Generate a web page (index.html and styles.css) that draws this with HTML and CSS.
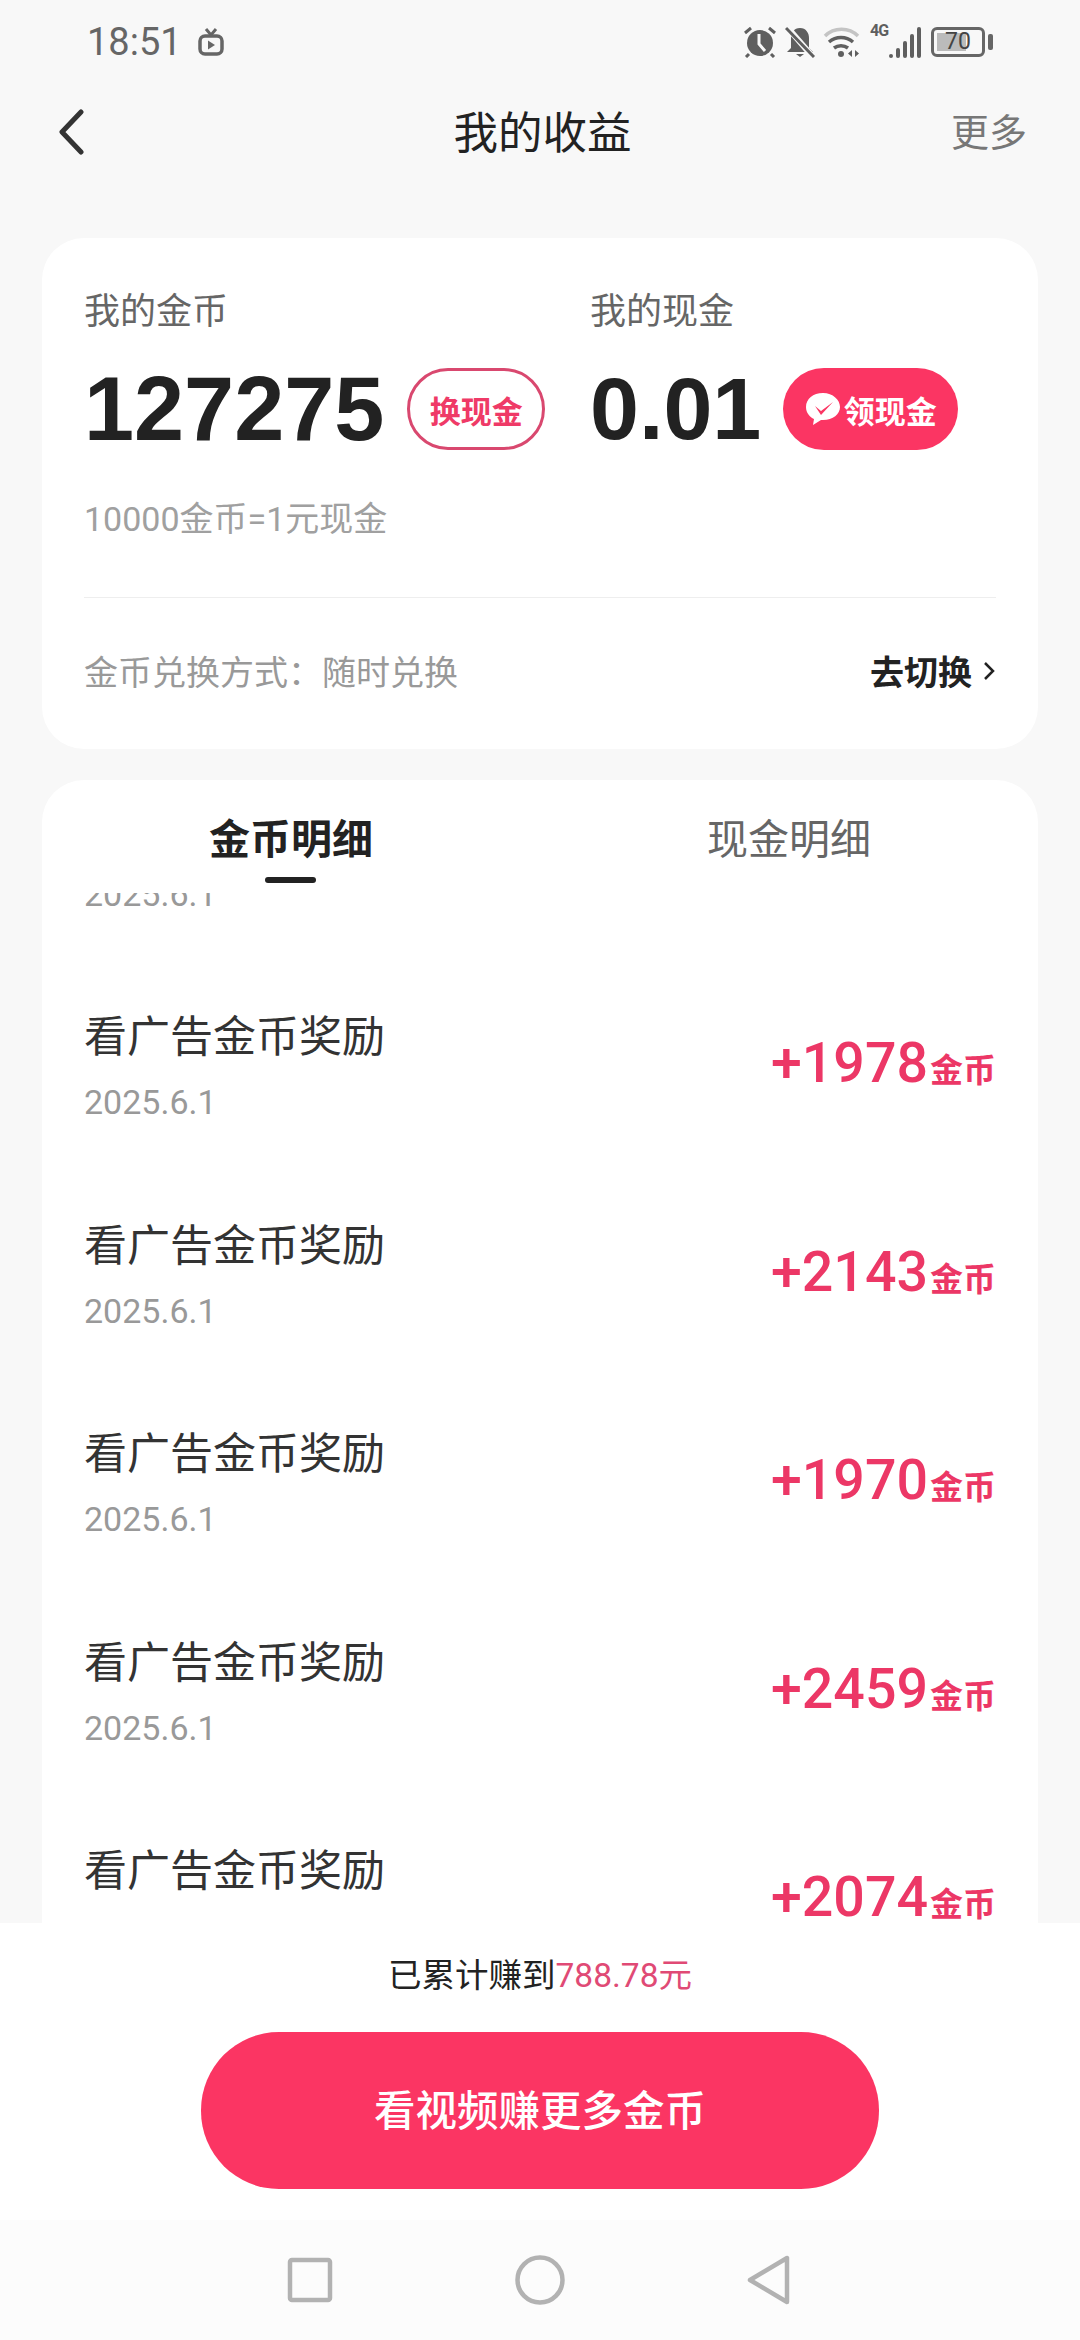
FILE: index.html
```html
<!DOCTYPE html>
<html lang="zh">
<head>
    <meta charset="utf-8">
    <title>我的收益</title>
    <link rel="stylesheet" href="styles.css">
</head>
<body>
    <div class="page">
        <div class="status-bar">
            <div class="status-left">
                <span class="clock">18:51</span>
                <svg class="tv-icon" width="26" height="28" viewBox="0 0 26 28">
                    <path d="M8 1l5 6 5-6" fill="none" stroke="#666" stroke-width="3"/>
                    <rect x="2" y="8" width="22" height="18" rx="5" fill="none" stroke="#666" stroke-width="3.5"/>
                    <path d="M10 12.5v9l7-4.500z" fill="#666"/>
                </svg>
            </div>
            <div class="status-right">
                <!-- alarm -->
                <svg width="34" height="32" viewBox="0 0 34 32">
                    <circle cx="17" cy="17" r="13" fill="#5f5f5f"/>
                    <path d="M2 7l6-5M32 7l-6-5M6 28l-3 3M28 28l3 3" stroke="#5f5f5f" stroke-width="3"/>
                    <path d="M16 8v10l6 7" fill="none" stroke="#f8f8f8" stroke-width="3"/>
                </svg>
                <!-- muted bell -->
                <svg width="30" height="32" viewBox="0 0 30 32">
                    <path d="M15 2c6 0 9 5 9 10v10l4 4H2l4-4V12c0-5 3-10 9-10z" fill="#5f5f5f"/>
                    <path d="M11 28h8l-4 3z" fill="#5f5f5f"/>
                    <path d="M2 1l26 30" stroke="#f8f8f8" stroke-width="6"/>
                    <path d="M1 2l28 29" stroke="#5f5f5f" stroke-width="3"/>
                </svg>
                <!-- wifi -->
                <svg width="38" height="32" viewBox="0 0 38 32">
                    <path d="M2 10C11 1 26 1 35 10" fill="none" stroke="#c4c4c4" stroke-width="3.500"/>
                    <path d="M6 16c7-6 17-6 24 0" fill="none" stroke="#5f5f5f" stroke-width="3.500"/>
                    <path d="M11 22c4-3 10-3 14 0" fill="none" stroke="#5f5f5f" stroke-width="3.500"/>
                    <circle cx="18" cy="28" r="3" fill="#5f5f5f"/>
                    <path d="M29 24v7l-4-3.500zM32 24v7l4-3.500z" fill="#5f5f5f"/>
                </svg>
                <div class="signal">
                    <span class="signal-type">4G</span>
                    <span class="bar bar-1"></span>
                    <span class="bar bar-2"></span>
                    <span class="bar bar-3"></span>
                    <span class="bar bar-4"></span>
                    <span class="bar bar-5"></span>
                </div>
                <div class="battery">
                    <div class="battery-body">
                        <div class="battery-fill"></div>
                        <span class="battery-num">70</span>
                    </div>
                    <span class="battery-tip"></span>
                </div>
            </div>
        </div>

        <div class="top-nav">
            <svg class="back" width="26" height="46" viewBox="0 0 26 46">
                <path d="M23 3L4 23l19 20" fill="none" stroke="#333" stroke-width="5" stroke-linecap="round" stroke-linejoin="round"/>
            </svg>
            <h1 class="top-title">我的收益</h1>
            <span class="top-more">更多</span>
        </div>

        <div class="card summary">
            <div class="balances">
                <div class="balance balance-coin">
                    <div class="balance-label">我的金币</div>
                    <div class="balance-row">
                        <span class="balance-num">127275</span>
                        <span class="pill pill-outline">换现金</span>
                    </div>
                </div>
                <div class="balance">
                    <div class="balance-label">我的现金</div>
                    <div class="balance-row cash-row">
                        <span class="balance-num cash-num">0.01</span>
                        <span class="pill pill-solid">
                            <svg width="36" height="34" viewBox="0 0 36 34">
                                <path d="M18 1C8 1 1 7 1 15c0 6 4 10 8 12l-1 6 8-5h2c10 0 17-6 17-13S28 1 18 1z" fill="#fff"/>
                                <path d="M10 14l6 5L28 10l-12 13z" fill="#fb3563"/>
                            </svg>
                            领现金
                        </span>
                    </div>
                </div>
            </div>
            <div class="rate">10000金币=1元现金</div>
            <div class="switch-row">
                <span class="switch-label">金币兑换方式：随时兑换</span>
                <span class="switch-link">去切换
                    <svg width="14" height="22" viewBox="0 0 14 22">
                        <path d="M3 3l8 8-8 8" fill="none" stroke="#222" stroke-width="2.500"/>
                    </svg>
                </span>
            </div>
        </div>

        <div class="card detail">
            <div class="tabs">
                <div class="tab active">金币明细</div>
                <div class="tab">现金明细</div>
            </div>
            <div class="list-box">
                <div class="list">
                    <div class="row">
                        <div>
                            <div class="row-title">看广告金币奖励</div>
                            <div class="row-date">2025.6.1</div>
                        </div>
                    </div>
                    <div class="row">
                        <div>
                            <div class="row-title">看广告金币奖励</div>
                            <div class="row-date">2025.6.1</div>
                        </div>
                        <div class="row-amount">+1978<small>金币</small></div>
                    </div>
                    <div class="row">
                        <div>
                            <div class="row-title">看广告金币奖励</div>
                            <div class="row-date">2025.6.1</div>
                        </div>
                        <div class="row-amount">+2143<small>金币</small></div>
                    </div>
                    <div class="row">
                        <div>
                            <div class="row-title">看广告金币奖励</div>
                            <div class="row-date">2025.6.1</div>
                        </div>
                        <div class="row-amount">+1970<small>金币</small></div>
                    </div>
                    <div class="row">
                        <div>
                            <div class="row-title">看广告金币奖励</div>
                            <div class="row-date">2025.6.1</div>
                        </div>
                        <div class="row-amount">+2459<small>金币</small></div>
                    </div>
                    <div class="row">
                        <div>
                            <div class="row-title">看广告金币奖励</div>
                        </div>
                        <div class="row-amount">+2074<small>金币</small></div>
                    </div>
                </div>
            </div>
        </div>

        <div class="footer">
            <div class="total">已累计赚到<span class="total-num">788.78元</span></div>
            <div class="watch-btn">看视频赚更多金币</div>
        </div>

        <div class="sys-nav">
            <svg width="46" height="46" viewBox="0 0 46 46">
                <rect x="3" y="3" width="40" height="40" rx="2" fill="none" stroke="#b2b2b2" stroke-width="4.500"/>
            </svg>
            <svg width="50" height="50" viewBox="0 0 50 50">
                <circle cx="25" cy="25" r="22.500" fill="none" stroke="#b2b2b2" stroke-width="4.500"/>
            </svg>
            <svg width="44" height="50" viewBox="0 0 44 50">
                <path d="M40 3v44L3 25z" fill="none" stroke="#b2b2b2" stroke-width="4.500" stroke-linejoin="round"/>
            </svg>
        </div>
    </div>
</body>
</html>
```

FILE: styles.css
```css
* {
    box-sizing: border-box;
}
body {
    margin: 0;
    background-color: #f8f8f8;
    font-family: Roboto, "Noto Sans CJK SC", sans-serif;
}
.page {
    width: 1080px;
    height: 2340px;
    display: flex;
    flex-direction: column;
    overflow: hidden;
}

/* status bar */
.status-bar {
    height: 88px;
    flex: none;
    display: flex;
    justify-content: space-between;
    align-items: center;
    padding: 0 87px 4px;
}
.status-left {
    display: flex;
    align-items: center;
    gap: 16px;
}
.clock {
    font-size: 38px;
    line-height: 44px;
    color: #666;
}
.status-right {
    display: flex;
    align-items: center;
    gap: 8px;
}
.signal {
    width: 50px;
    height: 32px;
    margin-left: 2px;
    display: flex;
    align-items: flex-end;
    justify-content: flex-end;
    gap: 3px;
    position: relative;
}
.signal-type {
    position: absolute;
    left: -1px;
    top: -3px;
    font-size: 16px;
    line-height: 16px;
    font-weight: 700;
    letter-spacing: -1px;
    color: #5f5f5f;
}
.bar {
    width: 4px;
    background: #5f5f5f;
    border-radius: 2px;
}
.bar-1 { height: 4px; }
.bar-2 { height: 10px; }
.bar-3 { height: 17px; }
.bar-4 { height: 24px; }
.bar-5 { height: 31px; }
.battery {
    margin-left: 2px;
    display: flex;
    align-items: center;
    gap: 3px;
}
.battery-body {
    width: 54px;
    height: 30px;
    border: 3px solid #666;
    border-radius: 6px;
    padding: 3px;
    position: relative;
}
.battery-fill {
    width: 70%;
    height: 100%;
    background: #bbb;
}
.battery-num {
    position: absolute;
    inset: 0;
    text-align: center;
    font-size: 23px;
    line-height: 24px;
    color: #444;
}
.battery-tip {
    width: 5px;
    height: 16px;
    background: #666;
    border-radius: 2px;
}

/* title bar */
.top-nav {
    height: 88px;
    flex: none;
    display: grid;
    grid-template-columns: 1fr auto 1fr;
    align-items: center;
    padding: 0 53px 0 58px;
}
.top-title {
    margin: 3px 0 0;
    font-size: 44.500px;
    line-height: 60px;
    font-weight: 400;
    color: #222;
}
.top-more {
    justify-self: end;
    margin-bottom: 6px;
    font-size: 38px;
    color: #777;
}

/* cards */
.card {
    margin: 0 42px;
    background: #fff;
    border-radius: 42px;
}
.summary {
    flex: none;
    height: 511px;
    margin-top: 62px;
    padding: 52px 42px 0;
    display: flex;
    flex-direction: column;
}
.balances {
    display: flex;
}
.balance-coin {
    width: 506px;
}
.balance-label {
    font-size: 36px;
    line-height: 44px;
    color: #666;
}
.balance-row {
    display: flex;
    align-items: center;
    gap: 23px;
    margin-top: 34px;
}
.cash-row {
    gap: 22px;
}
.balance-num {
    font-family: "Liberation Sans", sans-serif;
    font-size: 90px;
    line-height: 82px;
    font-weight: 700;
    color: #222;
}
.balance-num.cash-num {
    font-size: 88px;
}
.pill {
    height: 82px;
    border-radius: 41px;
    display: flex;
    align-items: center;
    justify-content: center;
    font-size: 31px;
    font-weight: 700;
}
.pill-outline {
    width: 138px;
    border: 3px solid #d9486f;
    color: #ef3a67;
}
.pill-solid {
    width: 175px;
    gap: 3px;
    background: #fb3563;
    color: #fff;
}
.rate {
    margin-top: 47px;
    font-size: 34px;
    line-height: 44px;
    color: #a0a0a0;
}
.switch-row {
    flex: 1;
    margin-top: 56px;
    padding-bottom: 6px;
    border-top: 1px solid #eee;
    display: flex;
    justify-content: space-between;
    align-items: center;
}
.switch-label {
    font-size: 34px;
    color: #999;
}
.switch-link {
    display: flex;
    align-items: center;
    gap: 10px;
    font-size: 34px;
    font-weight: 700;
    color: #222;
}

/* detail card, its bottom runs on under the footer */
.detail {
    flex: 1;
    min-height: 0;
    margin-top: 31px;
    border-radius: 42px 42px 0 0;
    display: flex;
    flex-direction: column;
    overflow: hidden;
}
.tabs {
    height: 113px;
    flex: none;
    display: grid;
    grid-template-columns: 1fr 1fr;
}
.tab {
    padding-top: 30px;
    text-align: center;
    font-size: 41px;
    line-height: 60px;
    color: #666;
}
.tab.active {
    font-weight: 700;
    color: #222;
    position: relative;
}
.tab.active::after {
    content: "";
    position: absolute;
    left: 50%;
    bottom: 10px;
    width: 51px;
    height: 6px;
    margin-left: -26px;
    border-radius: 3px;
    background: #222;
}
.list-box {
    flex: 1;
    min-height: 0;
    overflow: hidden;
}
.list {
    margin-top: -135.5px;
}
.row {
    height: 208.500px;
    padding: 41px 42px 0;
    display: flex;
    justify-content: space-between;
    align-items: flex-start;
}
.row-title {
    font-size: 43px;
    line-height: 60px;
    color: #333;
}
.row-date {
    margin-top: 15px;
    font-size: 34px;
    line-height: 40px;
    color: #999;
}
.row-amount {
    margin-top: 27px;
    font-size: 55.500px;
    line-height: 60px;
    font-weight: 500;
    color: #ec3766;
}
.row-amount small {
    margin-left: 2px;
    font-size: 33px;
    font-weight: 700;
}

/* footer */
.footer {
    height: 297px;
    flex: none;
    background: #fff;
    display: flex;
    flex-direction: column;
    align-items: center;
    padding-top: 30px;
}
.total {
    font-size: 33.500px;
    line-height: 46px;
    color: #222;
}
.total-num {
    color: #e04a75;
}
.watch-btn {
    width: 678px;
    height: 157px;
    margin-top: 33px;
    padding-bottom: 5px;
    border-radius: 78px;
    background: #fb3563;
    color: #fff;
    font-size: 41.500px;
    font-weight: 500;
    display: flex;
    align-items: center;
    justify-content: center;
}
.sys-nav {
    height: 120px;
    flex: none;
    background: #fcfcfc;
    display: flex;
    align-items: center;
    padding-left: 287px;
    gap: 182px;
}
```
